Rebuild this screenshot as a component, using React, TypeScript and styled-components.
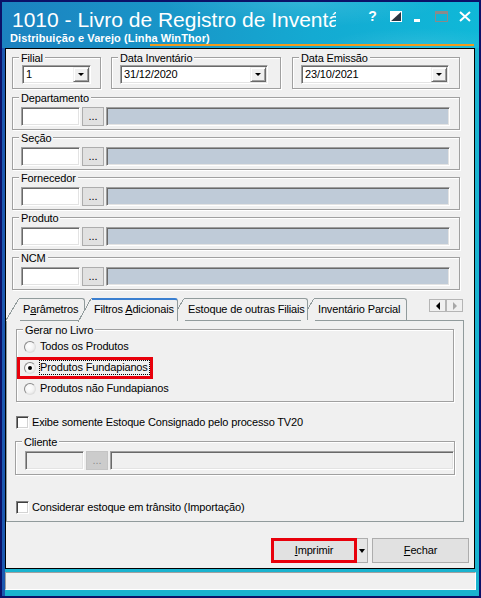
import React from 'react';
import styled, { createGlobalStyle, css } from 'styled-components';

const UI_FONT = `"Liberation Sans", Arial, sans-serif`;

const GlobalStyle = createGlobalStyle`
  html, body { margin: 0; padding: 0; }
  body { width: 481px; height: 598px; overflow: hidden; background: #0b1168; }
  *, *::before, *::after { box-sizing: border-box; }
`;

const Window = styled.div`
  width: 481px;
  height: 598px;
  padding: 2px;
  background: #0b1168;
  font-family: ${UI_FONT};
  font-size: 11px;
  line-height: 13px;
  color: #000;
  letter-spacing: -0.15px;
`;

const Frame = styled.div`
  height: 594px;
  display: flex;
  flex-direction: column;
  background: #19b3cf;
`;

const TitleBar = styled.div`
  flex: none;
  height: 46px;
  display: flex;
  flex-direction: column;
  color: #fff;
  letter-spacing: 0;
  background:
    radial-gradient(ellipse 200px 36px at 300px 0px, rgba(255, 255, 255, 0.12), transparent 70%),
    radial-gradient(ellipse 140px 26px at 420px 44px, rgba(255, 255, 255, 0.1), transparent 70%),
    linear-gradient(90deg, #1c82c0 0%, #1996c8 35%, #14aad2 65%, #0fb8d8 100%);
`;

const TitleRow = styled.div`
  height: 30px;
  display: flex;
  align-items: flex-start;
  padding-top: 6px;
`;

const TitleText = styled.div`
  flex: none;
  width: 324px;
  margin-left: 10px;
  overflow: hidden;
  white-space: nowrap;
  font-size: 21px;
  line-height: 24px;
`;

const Controls = styled.div`
  margin-left: auto;
  margin-right: 3px;
  margin-top: 3px;
  display: flex;
`;

const Ctrl = styled.span<{ $bottom?: boolean; $shift?: number }>`
  width: 23px;
  height: 11px;
  display: flex;
  align-items: ${(p) => (p.$bottom ? 'flex-end' : 'center')};
  justify-content: center;
  padding-right: ${(p) => p.$shift ?? 0}px;
`;

const HelpGlyph = styled.span`
  font: bold 14px/11px ${UI_FONT};
  color: #fff;
`;

const Subtitle = styled.div`
  height: 12px;
  padding-left: 8px;
  font-weight: bold;
  font-size: 11px;
  line-height: 12px;
  letter-spacing: 0.1px;
  white-space: nowrap;
`;

const AccentLine = styled.div`
  height: 2px;
  margin: 0 5px 0 148px;
  background: #f29a1a;
`;

const Body = styled.div`
  flex: 1;
  display: flex;
  flex-direction: column;
  border-left: 3px solid #1b58b0;
`;

const Client = styled.div`
  flex: none;
  height: 521px;
  margin-right: 4px;
  border: 1px solid #000;
  background: #f0f0f0;
  display: flex;
  flex-direction: column;
  padding-top: 8px;
`;

const StatusBar = styled.div`
  flex: none;
  height: 18px;
  margin: 3px 3px 0 0;
  background: #f0f0f0;
  border: 1px solid;
  border-color: #a0a0a0 #fff #fff #a0a0a0;
`;

const TopRow = styled.div`
  display: flex;
  padding-left: 6px;
`;

const GroupBox = styled.div<{ $w?: number; $h: number; $pad: string; $col?: boolean; $ml?: number; $mt?: number }>`
  position: relative;
  flex: none;
  width: ${(p) => (p.$w ? `${p.$w}px` : 'auto')};
  height: ${(p) => p.$h}px;
  margin-left: ${(p) => p.$ml ?? 0}px;
  margin-top: ${(p) => p.$mt ?? 0}px;
  border: 1px solid #a0a0a0;
  box-shadow: inset 1px 1px 0 #fff, 1px 1px 0 #fff;
  padding: ${(p) => p.$pad};
  display: flex;
  flex-direction: ${(p) => (p.$col ? 'column' : 'row')};
  align-items: flex-start;
`;

const Legend = styled.span`
  position: absolute;
  top: -6px;
  left: 6px;
  padding: 0 2px;
  background: #f0f0f0;
  line-height: 13px;
  white-space: nowrap;
`;

const sunken = css`
  border-style: solid;
  border-width: 1px;
  border-color: #a0a0a0 #fff #fff #a0a0a0;
  box-shadow: inset 1px 1px 0 #696969, inset -1px -1px 0 #e3e3e3;
`;

const Combo = styled.div<{ $w: number }>`
  ${sunken};
  flex: none;
  width: ${(p) => p.$w}px;
  height: 19px;
  background: #fff;
  display: flex;
  padding: 1px;
`;

const ComboText = styled.span`
  flex: 1;
  padding-left: 2px;
  line-height: 15px;
`;

const DropBtn = styled.span`
  flex: none;
  width: 16px;
  height: 15px;
  background: #f0f0f0;
  border: 1px solid;
  border-color: #f0f0f0 #696969 #696969 #f0f0f0;
  box-shadow: inset 1px 1px 0 #fff, inset -1px -1px 0 #a0a0a0;
  display: flex;
  align-items: center;
  justify-content: center;
`;

const Caret = styled.span`
  width: 0;
  height: 0;
  border-left: 3px solid transparent;
  border-right: 3px solid transparent;
  border-top: 3px solid #000;
`;

const CodeInput = styled.span<{ $disabled?: boolean }>`
  ${sunken};
  flex: none;
  width: 59px;
  height: 19px;
  background: ${(p) => (p.$disabled ? '#f0f0f0' : '#fff')};
`;

const DotsButton = styled.span<{ $disabled?: boolean }>`
  flex: none;
  width: 22px;
  height: 19px;
  margin-left: 2px;
  background: ${(p) => (p.$disabled ? '#cccccc' : '#e1e1e1')};
  border: 1px solid ${(p) => (p.$disabled ? '#c4c4c4' : '#adadad')};
  color: ${(p) => (p.$disabled ? '#8e8e8e' : '#000')};
  display: flex;
  align-items: center;
  justify-content: center;
  line-height: 13px;
  letter-spacing: 0;
`;

const DescField = styled.span<{ $disabled?: boolean }>`
  ${sunken};
  flex: 1;
  height: 19px;
  margin-left: 2px;
  background: ${(p) => (p.$disabled ? '#f0f0f0' : '#bfcbd8')};
`;

const TabArea = styled.div`
  margin-top: 8px;
  width: 458px;
  display: flex;
  flex-direction: column;
`;

const TabStrip = styled.div`
  position: relative;
  z-index: 1;
  height: 22px;
  display: flex;
  align-items: flex-start;
`;

const Tab = styled.div<{ $w: number; $active?: boolean; $z: number; $first?: boolean }>`
  position: relative;
  z-index: ${(p) => (p.$active ? 10 : p.$z)};
  flex: none;
  width: ${(p) => p.$w}px;
  height: ${(p) => (p.$active ? 23 : 22)}px;
  margin-left: ${(p) => (p.$first ? 14 : 7)}px;
  padding: ${(p) => (p.$active ? '3px 0 0 2px' : '4px 0 0 3px')};
  background: #f0f0f0;
  border-top: ${(p) => (p.$active ? '2px solid #3a7fd0' : '1px solid #919b9c')};
  border-right: 1px solid #919b9c;
  border-top-right-radius: 3px;
  white-space: nowrap;
  line-height: 13px;
  &::before {
    content: '';
    position: absolute;
    left: -14px;
    top: ${(p) => (p.$active ? -2 : -1)}px;
    width: 14px;
    height: ${(p) => (p.$active ? 25 : 23)}px;
    background: linear-gradient(
      to bottom right,
      transparent calc(50% - 1px),
      #919b9c calc(50% - 1px),
      #919b9c 50%,
      #f0f0f0 50%
    );
  }
`;

const ScrollBtns = styled.div`
  margin-left: auto;
  margin-right: 1px;
  margin-top: 1px;
  display: flex;
`;

const ScrollBtn = styled.span`
  width: 17px;
  height: 13px;
  border: 1px solid #b5b5b5;
  background: #f0f0f0;
  display: flex;
  align-items: center;
  justify-content: center;
`;

const ArrowLeft = styled.span<{ $dim?: boolean }>`
  width: 0;
  height: 0;
  border-top: 4px solid transparent;
  border-bottom: 4px solid transparent;
  border-right: 4px solid ${(p) => (p.$dim ? '#a8a8a8' : '#000')};
`;

const ArrowRight = styled.span<{ $dim?: boolean }>`
  width: 0;
  height: 0;
  border-top: 4px solid transparent;
  border-bottom: 4px solid transparent;
  border-left: 4px solid ${(p) => (p.$dim ? '#a8a8a8' : '#000')};
`;

const Panel = styled.div`
  height: 202px;
  border: 1px solid #919b9c;
  background: #f0f0f0;
  display: flex;
  flex-direction: column;
  align-items: flex-start;
  padding: 8px 9px 0 9px;
`;

const RadioRow = styled.div<{ $marked?: boolean }>`
  position: relative;
  height: 21px;
  display: flex;
  align-items: center;
  ${(p) =>
    p.$marked &&
    css`
      &::after {
        content: '';
        position: absolute;
        left: -7px;
        right: -3px;
        top: 0;
        bottom: -1px;
        border: 3px solid #e8000b;
      }
    `}
`;

const Radio = styled.span<{ $checked?: boolean }>`
  flex: none;
  position: relative;
  width: 12px;
  height: 12px;
  border-radius: 50%;
  border: 1px solid;
  border-color: #8a8a8a #dedede #dedede #8a8a8a;
  background: radial-gradient(circle at 40% 40%, #ffffff 0%, #f4f4f4 50%, #d8d8d8 100%);
  &::after {
    content: '';
    display: ${(p) => (p.$checked ? 'block' : 'none')};
    position: absolute;
    left: 3px;
    top: 3px;
    width: 4px;
    height: 4px;
    border-radius: 50%;
    background: #000;
  }
`;

const OptionLabel = styled.span<{ $focus?: boolean }>`
  margin-left: 3px;
  padding-right: 1px;
  border: 1px dotted ${(p) => (p.$focus ? '#000' : 'transparent')};
  line-height: 13px;
  white-space: nowrap;
`;

const CheckRow = styled.div<{ $mt: number }>`
  height: 13px;
  margin-top: ${(p) => p.$mt}px;
  display: flex;
  align-items: center;
`;

const CheckBox = styled.span`
  flex: none;
  width: 13px;
  height: 13px;
  background: #fff;
  border: 1px solid;
  border-color: #808080 #fff #fff #808080;
  box-shadow: inset 1px 1px 0 #404040, inset -1px -1px 0 #d4d4d4;
`;

const CheckText = styled.span`
  margin-left: 3px;
  line-height: 13px;
  white-space: nowrap;
`;

const ButtonRow = styled.div`
  display: flex;
  justify-content: flex-end;
  margin-top: 16px;
  padding-right: 5px;
`;

const PushButton = styled.button<{ $w: number; $marked?: boolean; $ml?: number }>`
  position: relative;
  flex: none;
  width: ${(p) => p.$w}px;
  height: 25px;
  margin: 0 0 0 ${(p) => p.$ml ?? 0}px;
  padding: 0;
  background: #e1e1e1;
  border: 1px solid #adadad;
  font: inherit;
  letter-spacing: inherit;
  color: #000;
  ${(p) =>
    p.$marked &&
    css`
      &::after {
        content: '';
        position: absolute;
        inset: -1px;
        border: 3px solid #e8000b;
      }
    `}
`;

const SplitArrow = styled.span`
  flex: none;
  width: 11px;
  height: 25px;
  background: #e5e5e5;
  border: 1px solid #adadad;
  border-left: none;
  display: flex;
  align-items: center;
  justify-content: center;
`;

const BigCaret = styled.span`
  width: 0;
  height: 0;
  border-left: 3px solid transparent;
  border-right: 3px solid transparent;
  border-top: 4px solid #000;
`;

const Key = styled.span`
  text-decoration: underline;
`;

type LookupProps = { label: string; mt: number };
const Lookup: React.FC<LookupProps> = ({ label, mt }) => (
  <GroupBox $w={448} $h={33} $pad="9px 9px 0 8px" $ml={6} $mt={mt}>
    <Legend>{label}</Legend>
    <CodeInput />
    <DotsButton>...</DotsButton>
    <DescField />
  </GroupBox>
);

type ComboGroupProps = { label: string; value: string; w: number; cw: number; ml: number; pl: number };
const ComboGroup: React.FC<ComboGroupProps> = ({ label, value, w, cw, ml, pl }) => (
  <GroupBox $w={w} $h={32} $pad={`7px 0 0 ${pl}px`} $ml={ml}>
    <Legend>{label}</Legend>
    <Combo $w={cw}>
      <ComboText>{value}</ComboText>
      <DropBtn>
        <Caret />
      </DropBtn>
    </Combo>
  </GroupBox>
);

export default function App() {
  return (
    <>
      <GlobalStyle />
      <Window>
        <Frame>
          <TitleBar>
            <TitleRow>
              <TitleText>1010 - Livro de Registro de Inventário</TitleText>
              <Controls>
                <Ctrl>
                  <HelpGlyph>?</HelpGlyph>
                </Ctrl>
                <Ctrl>
                  <svg width="12" height="11" viewBox="0 0 12 11">
                    <rect x="0.5" y="0.5" width="11" height="10" fill="#2a3440" stroke="#fff" />
                    <polygon points="0,0 12,0 0,11" fill="#fff" />
                  </svg>
                </Ctrl>
                <Ctrl $bottom $shift={4}>
                  <svg width="6" height="3" viewBox="0 0 6 3">
                    <rect x="0" y="0" width="6" height="3" fill="#fff" />
                  </svg>
                </Ctrl>
                <Ctrl>
                  <svg width="13" height="11" viewBox="0 0 13 11">
                    <rect x="0.5" y="0.5" width="12" height="10" fill="none" stroke="#8a8a8a" />
                    <rect x="0" y="0" width="13" height="3" fill="#8a8a8a" />
                  </svg>
                </Ctrl>
                <Ctrl>
                  <svg width="12" height="11" viewBox="0 0 12 11">
                    <path d="M1 1 L11 10 M11 1 L1 10" stroke="#fff" strokeWidth="2" />
                  </svg>
                </Ctrl>
              </Controls>
            </TitleRow>
            <Subtitle>Distribuição e Varejo (Linha WinThor)</Subtitle>
            <AccentLine />
          </TitleBar>

          <Body>
            <Client>
              <TopRow>
                <ComboGroup label="Filial" value="1" w={89} cw={69} ml={0} pl={9} />
                <ComboGroup label="Data Inventário" value="31/12/2020" w={170} cw={148} ml={10} pl={8} />
                <ComboGroup label="Data Emissão" value="23/10/2021" w={168} cw={148} ml={11} pl={8} />
              </TopRow>

              <Lookup label="Departamento" mt={8} />
              <Lookup label="Seção" mt={7} />
              <Lookup label="Fornecedor" mt={7} />
              <Lookup label="Produto" mt={7} />
              <Lookup label="NCM" mt={7} />

              <TabArea>
                <TabStrip>
                  <Tab $w={65} $z={4} $first>
                    P<Key>a</Key>râmetros
                  </Tab>
                  <Tab $w={86} $z={3} $active>
                    Filtros <Key>A</Key>dicionais
                  </Tab>
                  <Tab $w={123} $z={2}>
                    Estoque de outras Filiais
                  </Tab>
                  <Tab $w={92} $z={1}>
                    Inventário Parcial
                  </Tab>
                  <ScrollBtns>
                    <ScrollBtn>
                      <ArrowLeft />
                    </ScrollBtn>
                    <ScrollBtn>
                      <ArrowRight $dim />
                    </ScrollBtn>
                  </ScrollBtns>
                </TabStrip>
                <Panel>
                  <GroupBox $w={438} $h={73} $pad="6px 0 0 7px" $col>
                    <Legend>Gerar no Livro</Legend>
                    <RadioRow>
                      <Radio />
                      <OptionLabel>Todos os Produtos</OptionLabel>
                    </RadioRow>
                    <RadioRow $marked>
                      <Radio $checked />
                      <OptionLabel $focus>Produtos Fundapianos</OptionLabel>
                    </RadioRow>
                    <RadioRow>
                      <Radio />
                      <OptionLabel>Produtos não Fundapianos</OptionLabel>
                    </RadioRow>
                  </GroupBox>

                  <CheckRow $mt={14}>
                    <CheckBox />
                    <CheckText>Exibe somente Estoque Consignado pelo processo TV20</CheckText>
                  </CheckRow>

                  <GroupBox $w={440} $h={34} $pad="9px 0 0 9px" $ml={-1} $mt={12}>
                    <Legend>Cliente</Legend>
                    <CodeInput $disabled />
                    <DotsButton $disabled>...</DotsButton>
                    <DescField $disabled />
                  </GroupBox>

                  <CheckRow $mt={26}>
                    <CheckBox />
                    <CheckText>Considerar estoque em trânsito (Importação)</CheckText>
                  </CheckRow>
                </Panel>
              </TabArea>

              <ButtonRow>
                <PushButton $w={86} $marked>
                  <Key>I</Key>mprimir
                </PushButton>
                <SplitArrow>
                  <BigCaret />
                </SplitArrow>
                <PushButton $w={97} $ml={4}>
                  <Key>F</Key>echar
                </PushButton>
              </ButtonRow>
            </Client>
            <StatusBar />
          </Body>
        </Frame>
      </Window>
    </>
  );
}
